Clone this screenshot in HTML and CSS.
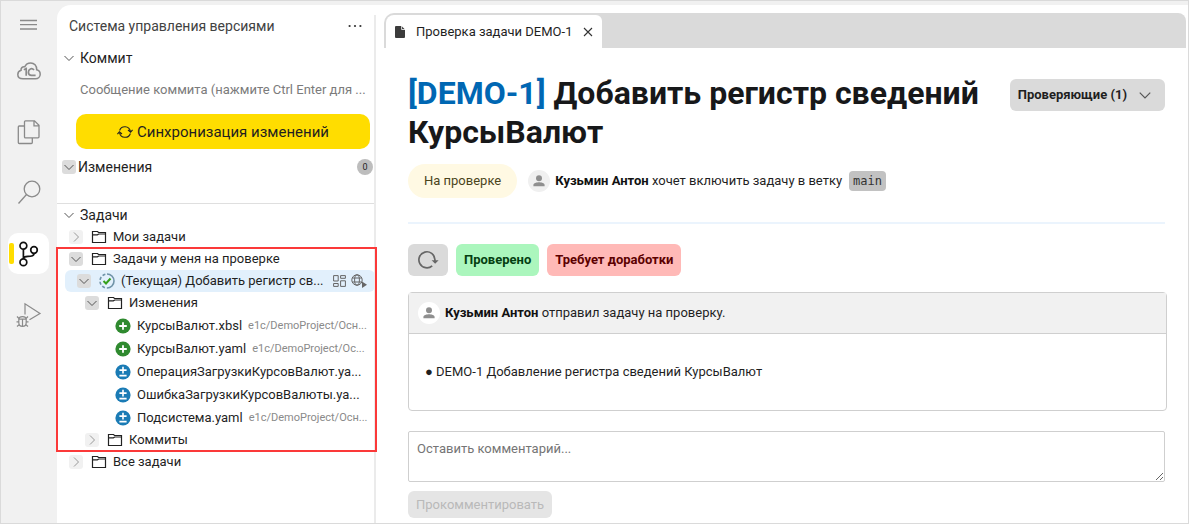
FILE: index.html
```html
<!DOCTYPE html>
<html lang="ru">
<head>
<meta charset="utf-8">
<meta name="viewport" content="width=device-width, initial-scale=1">
<title>Проверка задачи DEMO-1</title>
<link rel="stylesheet" href="styles.css">
</head>
<body>
<svg class="defs" aria-hidden="true">
  <symbol id="chev-down" viewBox="0 0 12 12"><path d="M1.5 4 6 8.5 10.5 4"/></symbol>
  <symbol id="chev-right" viewBox="0 0 12 12"><path d="M4 1.5 8.5 6 4 10.5"/></symbol>
  <symbol id="folder" viewBox="0 0 16 14"><path d="M1.5 12.5V1.5H6.5L7.5 2.5H14.5V12.5ZM1.5 4.8H6.3L7.8 4H14.5"/></symbol>
  <symbol id="added" viewBox="0 0 16 16"><circle cx="8" cy="8" r="7.6" fill="#2f8a2f"/><path d="M8 4.2V11.8M4.2 8H11.8" stroke="#fff" stroke-width="1.8"/></symbol>
  <symbol id="changed" viewBox="0 0 16 16"><circle cx="8" cy="8" r="7.6" fill="#1a7bb5"/><path d="M8 2.8V9.4M4.4 6.1H11.6M4.4 11.6H11.6" stroke="#fff" stroke-width="1.6"/></symbol>
  <symbol id="person" viewBox="0 0 22 22"><circle cx="11" cy="8.2" r="3"/><path d="M5.4 16.2V15C5.4 13 8.6 12.2 11 12.2S16.6 13 16.6 15V16.2Z"/></symbol>
</svg>
<div class="app">
  <nav class="rail" aria-label="Панели">
    <button class="rail-btn rail-menu" aria-label="Меню"><svg width="18" height="12" viewBox="0 0 18 12"><path d="M0 1.5H17M0 5.7H17M0 10H17"/></svg></button>
    <button class="rail-btn" aria-label="Облако 1С"><svg width="24" height="18" viewBox="0 0 24 18"><path d="M6 16.8H18.5C21.2 16.8 23.2 14.8 23.2 12.3C23.2 10 21.5 8.2 19.7 7.8C20 3.8 17 .9 13.8 .9C11 .9 8.8 2.2 7.8 4.8C5.3 4.3 3.7 6.3 4.1 8.3C2 8.9 .8 10.6 .8 12.5C.8 15 2.8 16.8 6 16.8Z" stroke-width="1.5"/><path d="M6.8 7.7 9.2 6.6V13.8M17 8C14.8 5.4 11.4 7 11.4 10.2C11.4 12.2 12.8 13.4 14.6 13.4H18.6" stroke-width="1.7"/></svg></button>
    <button class="rail-btn" aria-label="Файлы"><svg width="24" height="26" viewBox="0 0 24 26"><path d="M8.5 1.8H17.5L22 6.3V17.8Q22 18.9 21 18.9H8.5Q7.5 18.9 7.5 17.9V2.8Q7.5 1.8 8.5 1.8ZM17 2V6.8H22M7.3 7H2.3Q1.3 7 1.3 8V23.5Q1.3 24.5 2.3 24.5H14.3Q15.3 24.5 15.3 23.5V19"/></svg></button>
    <button class="rail-btn" aria-label="Поиск"><svg width="24" height="26" viewBox="0 0 24 26"><circle cx="15" cy="9" r="7.8"/><path d="M9.5 14.5 1.5 23.5"/></svg></button>
    <button class="rail-btn is-active" aria-label="Система управления версиями"><svg width="24" height="26" viewBox="0 0 24 26"><circle cx="6.4" cy="4.7" r="3.4"/><circle cx="6.4" cy="21.3" r="3.4"/><circle cx="17" cy="9" r="3.3"/><path d="M6.4 8V18M17 12.5C17 15 14 15.4 11 15.4C8.2 15.4 6.4 16 6.4 18"/></svg></button>
    <button class="rail-btn" aria-label="Отладка"><svg width="26" height="26" viewBox="0 0 26 26"><path d="M9 12.5V1.8L24 11.5 13.5 17.8M3 17.2Q3 14.7 6.5 14.7T10 17.2ZM2.8 17.2H10.2V20.5Q10.2 24.4 6.5 24.4T2.8 20.5ZM6.5 17.2V24M1 14.5 3 16.5M12 14.5 10 16.5M.5 19.8H3M10 19.8H12.5M1 24.5 3.4 22.5M12 24.5 9.6 22.5" stroke-width="1.2"/></svg></button>
  </nav>

  <div class="workspace">
    <aside class="side">
      <header class="side-head">
        <h2 class="side-title">Система управления версиями</h2>
        <button class="more" aria-label="Дополнительно"><svg width="14" height="4" viewBox="0 0 14 4"><circle cx="1.6" cy="2" r="1.1"/><circle cx="7" cy="2" r="1.1"/><circle cx="12.4" cy="2" r="1.1"/></svg></button>
      </header>
      <section class="commit">
        <button class="section-btn"><svg class="chev"><use href="#chev-down"/></svg>Коммит</button>
        <input class="message" type="text" aria-label="Сообщение коммита" placeholder="Сообщение коммита (нажмите Ctrl Enter для ...">
        <button class="sync"><svg width="16" height="14" viewBox="0 0 16 14"><path d="M2.6 5.5A5.6 5.6 0 0 1 13.4 6.2M13.4 8.5A5.6 5.6 0 0 1 2.6 7.8M11 5 13.6 7.2 15.6 4.8M.4 9.2 2.4 6.8 5 9"/></svg>Синхронизация изменений</button>
      </section>
      <section class="changes">
        <button class="toggle" aria-label="Свернуть"><svg class="chev"><use href="#chev-down"/></svg></button>
        <span class="changes-title">Изменения</span>
        <span class="count">0</span>
      </section>
      <section class="tasks">
        <button class="section-btn"><svg class="chev"><use href="#chev-down"/></svg>Задачи</button>
        <ul class="tree">
          <li class="row lvl1"><button class="toggle closed" aria-label="Развернуть"><svg class="chev"><use href="#chev-right"/></svg></button><svg class="folder"><use href="#folder"/></svg><span class="name">Мои задачи</span></li>
          <li class="review">
            <div class="row lvl1"><button class="toggle" aria-label="Свернуть"><svg class="chev"><use href="#chev-down"/></svg></button><svg class="folder"><use href="#folder"/></svg><span class="name">Задачи у меня на проверке</span></div>
            <div class="row lvl2 selected"><button class="toggle" aria-label="Свернуть"><svg class="chev"><use href="#chev-down"/></svg></button>
              <svg class="state" viewBox="0 0 16 16"><circle class="ring" cx="8" cy="8" r="7" transform="rotate(-90 8 8)"/><path d="M4.5 8 7 10.5 11.5 5.5"/></svg><span class="name">(Текущая) Добавить регистр св...</span>
              <button class="act" aria-label="Панель"><svg width="13" height="12" viewBox="0 0 13 12"><path d="M.6 .6H5.2V6H.6ZM7.6 .6H12.4V3.3H7.6ZM.6 8.5H5.2V11.4H.6ZM7.6 5.8H12.4V11.4H7.6Z"/></svg></button>
              <button class="act" aria-label="Открыть"><svg width="16" height="14" viewBox="0 0 16 14"><circle cx="6" cy="6" r="5.2"/><ellipse cx="6" cy="6" rx="2.4" ry="5.2"/><path d="M1.3 4H10.7M1.3 8H10.7"/><path d="M11 7.5V14L16 10.8Z" class="play"/></svg></button></div>
            <div class="row lvl3"><button class="toggle" aria-label="Свернуть"><svg class="chev"><use href="#chev-down"/></svg></button><svg class="folder"><use href="#folder"/></svg><span class="name">Изменения</span></div>
            <div class="row file"><svg class="mark"><use href="#added"/></svg><span class="name">КурсыВалют.xbsl</span><span class="path">e1c/DemoProject/Осн...</span></div>
            <div class="row file"><svg class="mark"><use href="#added"/></svg><span class="name">КурсыВалют.yaml</span><span class="path">e1c/DemoProject/Ос...</span></div>
            <div class="row file"><svg class="mark"><use href="#changed"/></svg><span class="name">ОперацияЗагрузкиКурсовВалют.ya...</span></div>
            <div class="row file"><svg class="mark"><use href="#changed"/></svg><span class="name">ОшибкаЗагрузкиКурсовВалюты.ya...</span></div>
            <div class="row file"><svg class="mark"><use href="#changed"/></svg><span class="name">Подсистема.yaml</span><span class="path">e1c/DemoProject/Осн...</span></div>
            <div class="row lvl3"><button class="toggle closed" aria-label="Развернуть"><svg class="chev"><use href="#chev-right"/></svg></button><svg class="folder"><use href="#folder"/></svg><span class="name">Коммиты</span></div>
          </li>
          <li class="row lvl1"><button class="toggle closed" aria-label="Развернуть"><svg class="chev"><use href="#chev-right"/></svg></button><svg class="folder"><use href="#folder"/></svg><span class="name">Все задачи</span></li>
        </ul>
      </section>
    </aside>

    <main class="main">
      <div class="tabs">
        <div class="tab"><svg width="10" height="12" viewBox="0 0 10 12"><path d="M0 1Q0 0 1 0H6.5L10 3.5V11Q10 12 9 12H1Q0 12 0 11Z" fill="#3c3c3c"/><path d="M6.6 0V3.5H10" fill="none" stroke="#fff" stroke-width=".8"/></svg><span>Проверка задачи DEMO-1</span><button class="close" aria-label="Закрыть"><svg width="10" height="10" viewBox="0 0 10 10"><path d="M1 1 9 9M9 1 1 9"/></svg></button></div>
      </div>
      <article class="task">
        <div class="task-head">
          <h1 class="title"><a class="title-link" href="#">[DEMO-1]</a> Добавить регистр сведений КурсыВалют</h1>
          <button class="reviewers">Проверяющие (1)<svg width="14" height="14"><use href="#chev-down"/></svg></button>
        </div>
        <div class="status">
          <span class="badge">На проверке</span>
          <span class="avatar"><svg width="22" height="22"><use href="#person"/></svg></span>
          <p class="line"><b>Кузьмин Антон</b> хочет включить задачу в ветку</p>
          <code class="branch">main</code>
        </div>
        <div class="actions">
          <button class="btn refresh" aria-label="Обновить"><svg width="22" height="20" viewBox="0 0 22 20"><path d="M15.2 15.8A8 8 0 1 1 17.9 9.5V12"/><path d="M14.6 10.2H21.6L18.1 13.8Z" fill="#666" stroke="none"/></svg></button>
          <button class="btn approve">Проверено</button>
          <button class="btn reject">Требует доработки</button>
        </div>
        <section class="card">
          <header class="card-head"><span class="avatar on-grey"><svg width="22" height="22"><use href="#person"/></svg></span><p class="line"><b>Кузьмин Антон</b> отправил задачу на проверку.</p></header>
          <p class="card-body">● DEMO-1 Добавление регистра сведений КурсыВалют</p>
        </section>
        <textarea class="comment" aria-label="Комментарий" placeholder="Оставить комментарий..."></textarea>
        <button class="send" disabled>Прокомментировать</button>
      </article>
    </main>
  </div>
</div>
</body>
</html>
```
FILE: styles.css
```css
* { box-sizing: border-box; }
body { margin: 0; background: #f1f1f1; color: #1f1f1f; font: 14px/20px Roboto, "Liberation Sans", sans-serif; }
button, input, textarea { font: inherit; color: inherit; }
button { padding: 0; border: 0; background: none; cursor: pointer; }
h1, h2, p, ul { margin: 0; padding: 0; }
ul { list-style: none; }
svg { flex: none; fill: none; }
b { font-weight: 700; color: #111; }
.defs { position: absolute; width: 0; height: 0; }

.app { display: flex; min-height: 100vh; border: 1px solid #dadada; }

.rail { display: flex; flex-direction: column; gap: 20px; flex: none; width: 56px; padding: 9px 8px 0 7px; }
.rail-btn { position: relative; display: grid; place-items: center; height: 41px; border-radius: 10px; }
.rail-btn svg { stroke: #8a8a8a; stroke-width: 1.3; }
.rail-menu { height: 30px; margin-bottom: -10px; }
.rail-btn.is-active { background: #fff; }
.rail-btn.is-active svg { stroke: #111; stroke-width: 1.7; }
.rail-btn.is-active::before { content: ""; position: absolute; left: 1px; top: 10px; width: 5px; height: 21px; border-radius: 2px; background: #ffdd00; }

.workspace { display: flex; flex: 1; min-width: 0; margin-top: 4px; background: #fff; border-top-left-radius: 14px; }

.side { position: relative; flex: none; width: 318px; }
.side::after { content: ""; position: absolute; top: 10px; right: -1px; bottom: 0; width: 2px; background: #ebebeb; }
.side-head { display: flex; align-items: center; justify-content: space-between; height: 42px; padding: 0 13px 0 12px; }
.side-title { font-size: 14px; font-weight: 400; color: #424242; }
.more svg { display: block; fill: #333; }

.section-btn { display: flex; align-items: center; gap: 5px; height: 22px; padding-left: 6px; }
.chev { width: 12px; height: 12px; stroke: #555; stroke-width: 1; }
.message { display: block; width: 100%; height: 40px; padding: 0 9px 0 23px; border: 0; outline: 0; background: none; font-size: 13px; }
.message::placeholder { color: #7b7b7b; }
.sync { display: flex; align-items: center; justify-content: center; gap: 4px; width: calc(100% - 24px); height: 35px; margin: 5px 5px 0 19px; border-radius: 10px; background: #ffdd00; font-size: 15px; }
.sync svg { stroke: #222; stroke-width: 1.1; }

.changes { display: flex; align-items: center; gap: 2px; padding: 8px 2px 26px 5px; }
.toggle { display: grid; place-items: center; flex: none; width: 14px; height: 14px; border-radius: 3px; background: #dcdcdc; }
.toggle.closed { background: #f1f1f1; }
.toggle.closed .chev { stroke: #999; }
.count { width: 16px; height: 16px; margin-left: auto; border-radius: 8px; background: #bdbdbd; font-size: 9px; line-height: 16px; text-align: center; }

.tasks { border-top: 1px solid #dfdfdf; }
.row { display: flex; align-items: center; height: 22px; padding-right: 8px; white-space: nowrap; }
.name { font-size: 13px; }
.lvl1 { padding-left: 12px; }
.lvl2 { margin-left: 8px; padding-left: 12px; }
.lvl3 { padding-left: 28px; }
.file { height: 23px; padding-left: 58px; }
.selected { border-radius: 6px; background: #e2f0fc; }
.folder { width: 16px; height: 14px; margin: 0 6px 0 8px; stroke: #222; stroke-width: 1.2; }
.state { width: 16px; height: 16px; margin: 0 6px 0 8px; stroke: #35a01a; stroke-width: 2; }
.state .ring { stroke: #6f93a8; stroke-width: 1.6; stroke-dasharray: 22 2 3 2 3 2 3 2 3 2; }
.mark { width: 16px; height: 16px; margin-right: 6px; }
.path { margin-left: 6px; font-size: 11px; color: #8a8a8a; }
.act { flex: none; margin-left: 5px; }
.selected .name { flex: 1; }
.act svg { display: block; stroke: #666; }
.act .play { fill: #666; stroke: none; }
.review { position: relative; }
.review::after { content: ""; position: absolute; z-index: 1; inset: -1px -2px -1px -1px; border: 2px solid #fb3939; pointer-events: none; }

.main { flex: 1; min-width: 0; padding: 8px 2px 0 9px; }
.tabs { display: flex; height: 35px; padding: 2px 0 0 2px; border-radius: 10px 8px 0 0; background: #dadada; }
.tab { display: flex; align-items: center; gap: 11px; padding: 0 9px; border-radius: 8px 6px 0 0; background: #fff; font-size: 13px; }
.close svg { display: block; stroke: #333; stroke-width: 1.1; }
.task { padding: 26px 21px 4px 24px; }
.task-head { display: flex; align-items: flex-start; justify-content: space-between; gap: 24px; }
.title { font-size: 32px; line-height: 39px; font-weight: 700; color: #17181a; }
.title-link { color: #0067b3; text-decoration: none; }
.reviewers { display: flex; align-items: center; gap: 11px; flex: none; height: 32px; margin-top: 5px; padding: 0 13px 0 8px; border-radius: 6px; background: #dadada; font-size: 13px; font-weight: 700; }
.reviewers svg { stroke: #555; }
.status { display: flex; align-items: center; padding: 12px 0 24px; border-bottom: 2px solid #ebf4fd; font-size: 13px; }
.badge { padding: 7px 16px; border-radius: 17px; background: #fff9e3; color: #4b451c; }
.avatar { width: 22px; height: 22px; margin: 0 5px 0 11px; border-radius: 11px; background: #f0f0f0; }
.avatar svg { display: block; fill: #8f8f8f; }
.avatar.on-grey { margin: 0 5px 0 0; background: #fff; }
.branch { margin-left: 7px; padding: 0 4px; border-radius: 4px; background: #c2c2c2; color: #333; font: 12px/20px "DejaVu Sans Mono", monospace; }
.actions { display: flex; gap: 8px; padding: 20px 0 16px; }
.btn { height: 32px; padding: 0 8px; border-radius: 6px; font-size: 13px; font-weight: 700; }
.refresh { padding: 0 9px; background: #dadada; }
.refresh svg { display: block; stroke: #666; stroke-width: 1.7; }
.approve { background: #abf6bd; color: #053f12; }
.reject { background: #ffb9b7; color: #5c0000; }
.card { margin-right: -2px; border: 1px solid #cfcfcf; border-radius: 4px; font-size: 13px; }
.card-head { display: flex; align-items: center; height: 41px; padding-left: 9px; border-bottom: 1px solid #cfcfcf; background: #f1f1f1; }
.card-body { padding: 28px 16px; }
.comment { display: block; width: 100%; height: 51px; margin: 20px 0 9px; padding: 7px 8px; border: 1px solid #cfcfcf; border-radius: 2px; outline: 0; font-size: 13px; resize: vertical; }
.comment::placeholder { color: #757575; }
.send { height: 27px; padding: 0 8px; border-radius: 6px; background: #e5e5e5; color: #b9b9b9; font-size: 13px; }
```
